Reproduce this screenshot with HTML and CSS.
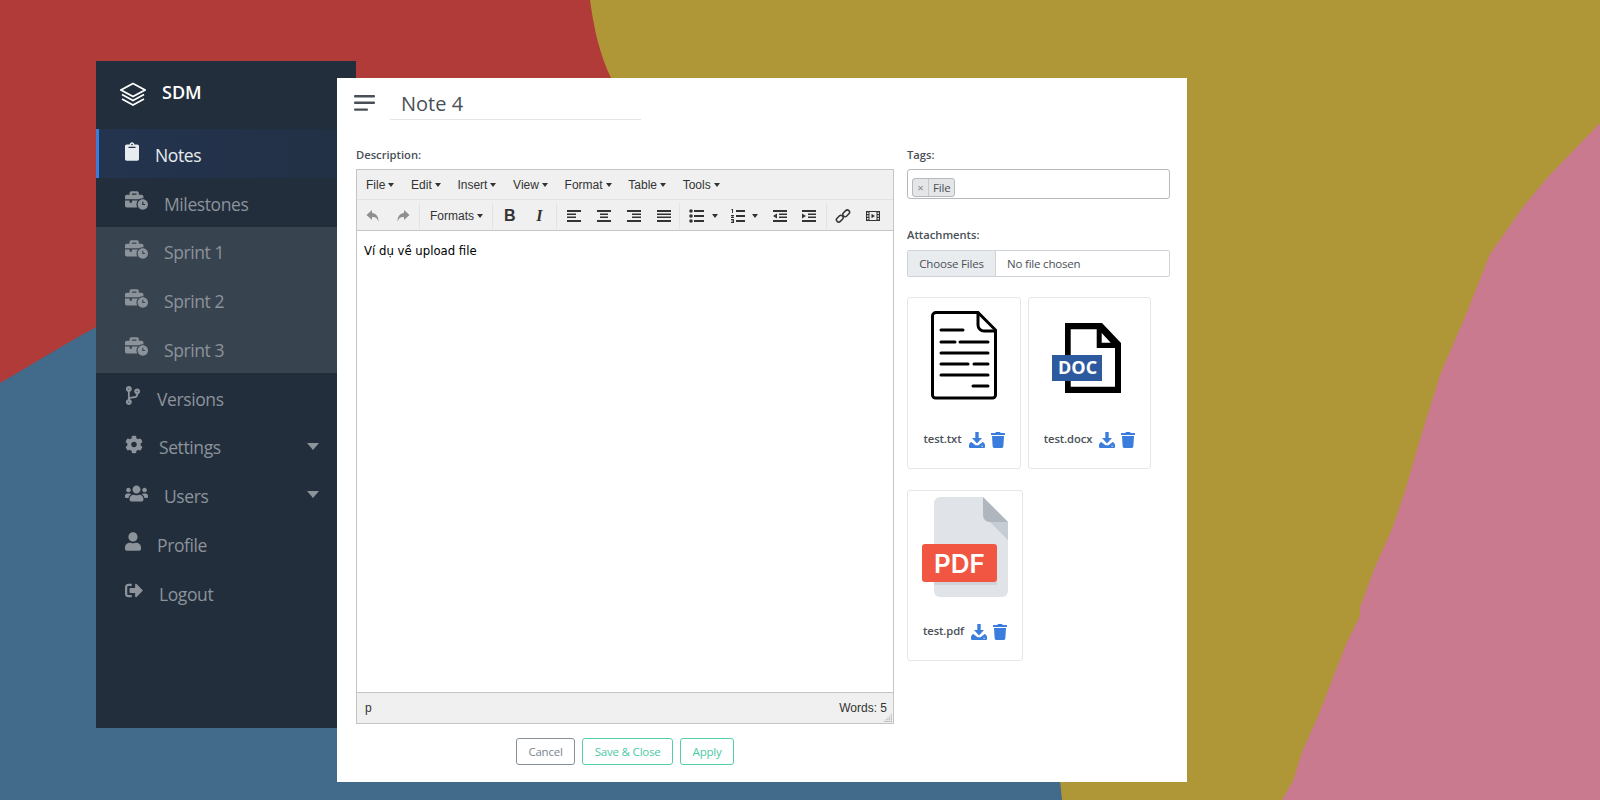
FILE: index.html
```html
<!DOCTYPE html>
<html lang="vi">
<head>
<meta charset="utf-8">
<title>SDM - Note 4</title>
<link rel="stylesheet" href="styles.css">
</head>
<body>
<svg class="wallpaper" viewBox="0 0 1600 800" preserveAspectRatio="none" aria-hidden="true">
  <rect width="1600" height="800" fill="#b13b39"/>
  <path fill="#426a8a" d="M0 383 C40 360 70 340 110 320 L700 300 L1062 780 L1062 800 L0 800 Z"/>
  <path fill="#af9737" d="M590 0 C594 30 600 55 611 78 L800 420 L1060 780 L1062 800 L1290 800 L1600 800 L1600 0 Z"/>
  <path fill="#ca7a8e" d="M1600 123 L1547 178 L1523 207 L1490 254 L1467 312 L1440 375 L1422 433 L1405 491 L1392 529 L1375 567 L1360 607 L1360 616 L1347 642 L1318 716 L1302 752 L1293 781 L1282 800 L1600 800 Z"/>
</svg>

<svg class="defs" aria-hidden="true">
  <defs>
    <symbol id="i-time" viewBox="0 0 640 512"><path d="M496 224c-79.59 0-144 64.41-144 144s64.41 144 144 144 144-64.41 144-144-64.41-144-144-144zm64 150.29c0 5.34-4.37 9.71-9.71 9.71h-60.57c-5.34 0-9.71-4.37-9.71-9.71v-76.57c0-5.34 4.37-9.71 9.71-9.71h12.57c5.34 0 9.71 4.37 9.71 9.71V352h38.29c5.34 0 9.71 4.37 9.71 9.71v12.58zM496 192c5.4 0 10.72.33 16 .81V144c0-25.6-22.4-48-48-48h-80V48c0-25.6-22.4-48-48-48H176c-25.6 0-48 22.4-48 48v48H48c-25.6 0-48 22.4-48 48v80h395.12c28.6-20.09 63.35-32 100.88-32zM320 96H192V64h128v32zM0 256v144c0 25.6 22.4 48 48 48h291.43C327.1 423.96 320 396.82 320 368c0-42.79 15.5-81.5 41-112H192v48c0 8.84-7.16 16-16 16h-32c-8.84 0-16-7.16-16-16v-48z"/></symbol>
    <symbol id="i-dl" viewBox="0 0 16 16"><path d="M6.300 0h3.400v6H13L8 11.500 3 6h3.300Z"/><path fill-rule="evenodd" d="M0 13.500c0-1.800 1-3 2.300-3.500L6.500 13.300h3L13.700 10c1.300.5 2.300 1.700 2.300 3.500V15a1 1 0 0 1-1 1H1a1 1 0 0 1-1-1ZM12.500 13.700v1h1.200v-1Z"/></symbol>
    <symbol id="i-trash" viewBox="0 0 448 512"><path d="M432 32H312l-9.4-18.7A24 24 0 0 0 281.1 0H166.8a23.72 23.72 0 0 0-21.4 13.3L136 32H16A16 16 0 0 0 0 48v32a16 16 0 0 0 16 16h416a16 16 0 0 0 16-16V48a16 16 0 0 0-16-16zM53.2 467a48 48 0 0 0 47.9 45h245.8a48 48 0 0 0 47.9-45L416 128H32z"/></symbol>
  </defs>
</svg>

<aside class="sidebar">
  <div class="brand">
    <svg class="brand-icon" viewBox="0 0 26 24" fill="none" stroke="#fff" stroke-width="1.700" stroke-linejoin="miter"><path d="M13 1.500 25 8 13 14.500 1 8Z"/><path d="M2 12.500 13 18.500 24 12.500"/><path d="M2 17 13 23 24 17"/></svg>
    <span>SDM</span>
  </div>
  <nav class="menu">
    <a class="item active"><svg class="ic w14" viewBox="0 0 384 512"><path d="M384 112v352c0 26.51-21.49 48-48 48H48c-26.51 0-48-21.49-48-48V112c0-26.51 21.49-48 48-48h80c0-35.29 28.71-64 64-64s64 28.71 64 64h80c26.51 0 48 21.49 48 48zM192 40c-13.255 0-24 10.745-24 24s10.745 24 24 24 24-10.745 24-24-10.745-24-24-24m96 114v-20a6 6 0 0 0-6-6H102a6 6 0 0 0-6 6v20a6 6 0 0 0 6 6h180a6 6 0 0 0 6-6z"/></svg><span>Notes</span></a>
    <a class="item"><svg class="ic w23"><use href="#i-time"/></svg><span>Milestones</span></a>
    <div class="submenu">
      <a class="item"><svg class="ic w23"><use href="#i-time"/></svg><span>Sprint 1</span></a>
      <a class="item"><svg class="ic w23"><use href="#i-time"/></svg><span>Sprint 2</span></a>
      <a class="item"><svg class="ic w23"><use href="#i-time"/></svg><span>Sprint 3</span></a>
    </div>
    <a class="item"><svg class="ic w16" viewBox="0 0 384 512"><path d="M384 144c0-44.2-35.8-80-80-80s-80 35.8-80 80c0 36.4 24.3 67.1 57.5 76.8-.6 16.1-4.2 28.5-11 36.9-15.4 19.2-49.3 22.4-85.2 25.7-28.2 2.6-57.4 5.4-81.3 16.9v-144c32.5-10.2 56-40.5 56-76.3 0-44.2-35.8-80-80-80S0 35.8 0 80c0 35.8 23.5 66.1 56 76.3v199.3C23.5 365.9 0 396.2 0 432c0 44.2 35.8 80 80 80s80-35.8 80-80c0-34-21.2-63.1-51.2-74.6 3.1-5.2 7.8-9.8 14.9-13.4 16.2-8.2 40.4-10.4 66.1-12.8 42.2-3.9 90-8.4 118.2-43.4 14-17.4 21.1-39.8 21.6-67.9 31.6-10.8 54.4-40.7 54.4-75.9zM80 64c8.8 0 16 7.2 16 16s-7.2 16-16 16-16-7.2-16-16 7.2-16 16-16zm0 384c-8.8 0-16-7.2-16-16s7.2-16 16-16 16 7.2 16 16-7.2 16-16 16zm224-320c8.8 0 16 7.2 16 16s-7.2 16-16 16-16-7.2-16-16 7.2-16 16-16z"/></svg><span>Versions</span></a>
    <a class="item caret"><svg class="ic w18" viewBox="0 0 512 512"><path d="M487.4 315.7l-42.6-24.6c4.3-23.2 4.3-47 0-70.2l42.6-24.6c4.9-2.8 7.1-8.6 5.5-14-11.1-35.6-30-67.8-54.7-94.6-3.8-4.1-10-5.1-14.8-2.3L380.8 110c-17.9-15.4-38.5-27.3-60.8-35.1V25.8c0-5.6-3.9-10.5-9.4-11.7-36.7-8.2-74.3-7.8-109.2 0-5.5 1.2-9.4 6.1-9.4 11.7V75c-22.2 7.9-42.8 19.8-60.8 35.1L88.7 85.5c-4.9-2.8-11-1.9-14.8 2.3-24.7 26.7-43.6 58.9-54.7 94.6-1.7 5.4.6 11.2 5.5 14L67.3 221c-4.3 23.2-4.3 47 0 70.2l-42.6 24.6c-4.9 2.8-7.1 8.6-5.5 14 11.1 35.6 30 67.8 54.7 94.6 3.8 4.1 10 5.1 14.8 2.3l42.6-24.6c17.9 15.4 38.5 27.3 60.8 35.1v49.2c0 5.6 3.9 10.5 9.4 11.7 36.7 8.2 74.3 7.8 109.2 0 5.5-1.2 9.4-6.1 9.4-11.7v-49.2c22.2-7.9 42.8-19.8 60.8-35.1l42.6 24.6c4.9 2.8 11 1.9 14.8-2.3 24.7-26.7 43.6-58.9 54.7-94.6 1.5-5.5-.7-11.3-5.6-14.1zM256 336c-44.1 0-80-35.9-80-80s35.9-80 80-80 80 35.9 80 80-35.9 80-80 80z"/></svg><span>Settings</span></a>
    <a class="item caret"><svg class="ic w23" viewBox="0 0 640 512"><path d="M96 224c35.3 0 64-28.7 64-64s-28.7-64-64-64-64 28.7-64 64 28.7 64 64 64zm448 0c35.3 0 64-28.7 64-64s-28.7-64-64-64-64 28.7-64 64 28.7 64 64 64zm32 32h-64c-17.6 0-33.5 7.1-45.1 18.6 40.3 22.1 68.9 62 75.1 109.4h66c17.7 0 32-14.3 32-32v-32c0-35.3-28.7-64-64-64zm-256 0c61.9 0 112-50.1 112-112S381.9 32 320 32 208 82.1 208 144s50.1 112 112 112zm76.8 32h-8.3c-20.8 10-43.9 16-68.5 16s-47.6-6-68.5-16h-8.3C179.6 288 128 339.6 128 403.2V432c0 26.5 21.5 48 48 48h288c26.5 0 48-21.5 48-48v-28.8c0-63.6-51.6-115.2-115.2-115.2zm-223.7-13.4C161.5 263.1 145.6 256 128 256H64c-35.3 0-64 28.7-64 64v32c0 17.7 14.3 32 32 32h65.9c6.3-47.4 34.9-87.3 75.2-109.4z"/></svg><span>Users</span></a>
    <a class="item"><svg class="ic w16" viewBox="0 0 448 512"><path d="M224 256c70.7 0 128-57.3 128-128S294.7 0 224 0 96 57.3 96 128s57.3 128 128 128zm89.6 32h-16.7c-22.2 10.2-46.9 16-72.9 16s-50.6-5.8-72.9-16h-16.7C60.2 288 0 348.2 0 422.4V464c0 26.5 21.5 48 48 48h352c26.5 0 48-21.5 48-48v-41.6c0-74.2-60.2-134.4-134.4-134.4z"/></svg><span>Profile</span></a>
    <a class="item"><svg class="ic w18" viewBox="0 0 512 512"><path d="M497 273L329 441c-15 15-41 4.5-41-17v-96H152c-13.3 0-24-10.7-24-24v-96c0-13.3 10.7-24 24-24h136V88c0-21.4 25.9-32 41-17l168 168c9.3 9.4 9.3 24.6 0 34zM192 436v-40c0-6.6-5.4-12-12-12H96c-17.7 0-32-14.3-32-32V160c0-17.7 14.3-32 32-32h84c6.6 0 12-5.4 12-12V76c0-6.6-5.4-12-12-12H96c-53 0-96 43-96 96v192c0 53 43 96 96 96h84c6.6 0 12-5.4 12-12z"/></svg><span>Logout</span></a>
  </nav>
</aside>

<main class="modal">
  <header class="modal-head">
    <svg class="burger" viewBox="0 0 21 16"><rect y="0" width="21" height="2.400" rx="1"/><rect y="6.600" width="21" height="2.400" rx="1"/><rect y="13.400" width="14" height="2.400" rx="1"/></svg>
    <div class="title">Note 4</div>
  </header>
  <div class="modal-body">
    <section class="left">
      <label class="lbl">Description:</label>
      <div class="editor">
        <div class="menubar">
          <span class="m">File</span><span class="m">Edit</span><span class="m">Insert</span><span class="m">View</span><span class="m">Format</span><span class="m">Table</span><span class="m">Tools</span>
        </div>
        <div class="toolbar">
          <div class="tgroup g-hist">
            <svg class="t dim" viewBox="0 0 16 16"><path d="M7 2 1.500 7 7 12V9c3-.3 5 .6 6.500 4.500C13.700 8.500 11 5.300 7 5Z"/></svg>
            <svg class="t dim" viewBox="0 0 16 16"><path d="M9 2l5.500 5L9 12V9C6 8.700 4 9.600 2.500 13.500 2.300 8.500 5 5.300 9 5Z"/></svg>
          </div>
          <div class="tgroup g-fmt"><span class="formats">Formats</span></div>
          <div class="tgroup g-style">
            <span class="t-b">B</span><span class="t-i">I</span>
          </div>
          <div class="tgroup g-align">
            <svg class="t" viewBox="0 0 16 16"><path d="M1 2h14v2H1zM1 5.500h9v1.500H1zM1 8.500h9v1.500H1zM1 12h14v2H1z"/></svg>
            <svg class="t" viewBox="0 0 16 16"><path d="M1 2h14v2H1zM4 5.500h8v1.500H4zM4 8.500h8v1.500H4zM1 12h14v2H1z"/></svg>
            <svg class="t" viewBox="0 0 16 16"><path d="M1 2h14v2H1zM6 5.500h9v1.500H6zM6 8.500h9v1.500H6zM1 12h14v2H1z"/></svg>
            <svg class="t" viewBox="0 0 16 16"><path d="M1 2h14v2H1zM1 5.500h14v1.500H1zM1 8.500h14v1.500H1zM1 12h14v2H1z"/></svg>
          </div>
          <div class="tgroup g-list">
            <span class="split s1"><svg class="t" viewBox="0 0 16 16"><path d="M5 2h10v2H5zM5 7h10v2H5zM5 12h10v2H5z"/><circle cx="2" cy="3" r="1.800"/><circle cx="2" cy="8" r="1.800"/><circle cx="2" cy="13" r="1.800"/></svg><i class="tri"></i></span>
            <span class="split s2"><svg class="t" viewBox="0 0 16 16"><path d="M6 2h9v2H6zM6 7h9v2H6zM6 12h9v2H6zM1.500 1h1.500v4H2V2H1.500zM1 7h3v1L2.500 9H4v1H1V9l2-1H1zM1 11h3v4H1v-1h2v-.5H1.500v-1H3V12H1z"/></svg><i class="tri"></i></span>
            <svg class="t" viewBox="0 0 16 16"><path d="M1 2h14v2H1zM7 5.500h8v1.500H7zM7 8.500h8v1.500H7zM1 12h14v2H1zM5 5.500v5L1 8z"/></svg>
            <svg class="t" viewBox="0 0 16 16"><path d="M1 2h14v2H1zM7 5.500h8v1.500H7zM7 8.500h8v1.500H7zM1 12h14v2H1zM1 5.500v5L5 8z"/></svg>
          </div>
          <div class="tgroup last">
            <svg class="t t-line" viewBox="0 0 16 16"><rect x="1" y="8.500" width="7.500" height="4.500" rx="2.200" transform="rotate(-45 4.700 10.700)"/><rect x="7.500" y="3" width="7.500" height="4.500" rx="2.200" transform="rotate(-45 11.300 5.300)"/></svg>
            <svg class="t" viewBox="0 0 16 16"><path fill-rule="evenodd" d="M1 3h14v10H1ZM4.500 4V12h7V4ZM2 4.500v1.500h1.500V4.500ZM2 7.200v1.500h1.500V7.200ZM2 10v1.500h1.500V10ZM12.500 4.500v1.500H14V4.500ZM12.500 7.200v1.500H14V7.200ZM12.500 10v1.500H14V10Z"/><path d="M6.500 5.800v4.400L10 8Z"/></svg>
          </div>
        </div>
        <div class="content">Ví dụ về upload file</div>
        <div class="statusbar">
          <span class="path">p</span>
          <span class="words">Words: 5</span>
          <svg class="grip" viewBox="0 0 10 10"><path d="M9 1h1v1H9zM7 3h1v1H7zM9 3h1v1H9zM5 5h1v1H5zM7 5h1v1H7zM9 5h1v1H9zM3 7h1v1H3zM5 7h1v1H5zM7 7h1v1H7zM9 7h1v1H9zM1 9h1v1H1zM3 9h1v1H3zM5 9h1v1H5zM7 9h1v1H7zM9 9h1v1H9z"/></svg>
        </div>
      </div>
      <div class="actions">
        <button class="btn grey">Cancel</button>
        <button class="btn green">Save &amp; Close</button>
        <button class="btn green">Apply</button>
      </div>
    </section>
    <section class="right">
      <label class="lbl">Tags:</label>
      <div class="tags"><span class="tag"><b>×</b><em>File</em></span></div>
      <label class="lbl attach">Attachments:</label>
      <div class="file"><span class="file-btn">Choose Files</span><span class="file-txt">No file chosen</span></div>
      <div class="cards">
        <article class="card c1">
          <svg class="thumb" width="66" height="89" viewBox="0 0 66 89" fill="none" stroke="#000" stroke-width="3"><path d="M5 1.500H47L64.500 19V84a3 3 0 0 1-3 3H4.500a3 3 0 0 1-3-3V5a3.500 3.500 0 0 1 3.500-3.500Z"/><path d="M47 2V14a6 6 0 0 0 6 6H64"/><path d="M10 19H32M10 31H24M29 31H57M10 42H57M10 53H37M43 53H57M10 64H57M42 75H57" stroke-linecap="round"/></svg>
          <div class="foot"><span>test.txt</span><svg class="act"><use href="#i-dl"/></svg><svg class="act tr"><use href="#i-trash"/></svg></div>
        </article>
        <article class="card c2">
          <svg class="thumb t-doc" width="70" height="72" viewBox="0 0 70 72"><path fill-rule="evenodd" d="M13 0H50L69 20V70H13ZM18.700 6.300V63.700H63V25H44.700V6.300ZM49.700 10V19.700H58.700Z"/><rect x="0" y="32" width="50" height="26" fill="#2d5a9e"/><text x="6" y="51" class="doc">DOC</text></svg>
          <div class="foot"><span>test.docx</span><svg class="act"><use href="#i-dl"/></svg><svg class="act tr"><use href="#i-trash"/></svg></div>
        </article>
        <article class="card c3">
          <svg class="thumb" width="86" height="100" viewBox="0 0 86 100"><path fill="#e0e3e7" d="M18 0H61L86 25V94a6 6 0 0 1-6 6H18a6 6 0 0 1-6-6V6a6 6 0 0 1 6-6Z"/><path fill="#c5ccd3" d="M61 18 86 43V25H68a7 7 0 0 1-7-7Z"/><path fill="#afb6bd" d="M61 0V18a7 7 0 0 0 7 7H86Z"/><path fill="#cfd4da" d="M12 84H75V88H12Z"/><rect x="0" y="47" width="75" height="38" rx="3" fill="#f15642"/><text x="12" y="75.500" class="pdf">PDF</text></svg>
          <div class="foot"><span>test.pdf</span><svg class="act"><use href="#i-dl"/></svg><svg class="act tr"><use href="#i-trash"/></svg></div>
        </article>
      </div>
    </section>
  </div>
</main>
</body>
</html>
```

FILE: styles.css
```css
* { box-sizing: border-box; }
html, body { margin: 0; height: 100%; overflow: hidden; }
body { font-family: "Open Sans", "Noto Sans", sans-serif; color: #495057; background: #b13b39; }
.wallpaper { position: absolute; inset: 0; width: 1600px; height: 800px; }
.defs { position: absolute; width: 0; height: 0; }

.sidebar { position: absolute; left: 96px; top: 61px; width: 260px; height: 667px; background: #222e3c; }
.brand { height: 68px; display: flex; align-items: center; padding: 0 0 4px 24px; gap: 16px; color: #fff; font-weight: 600; font-size: 18px; }
.brand span { margin-top: -3px; }
.brand-icon { width: 26px; height: 24px; margin-top: 2px; }
.item { height: 48.750px; display: flex; align-items: center; gap: 16px; padding: 3px 0 0 29px; font-size: 17.500px; color: #8c939b; position: relative; }
.item .ic { fill: #8c939b; height: 19px; margin-top: -6px; flex: none; }
.item span { letter-spacing: -.4px; }
.w14 { width: 14px; }
.w16 { width: 16px; }
.w18 { width: 18px; }
.w23 { width: 23px; }
.item.active { background: linear-gradient(90deg, #24344f, #223044); border-left: 3px solid #3b7ddd; padding-left: 26px; color: #e9ecef; }
.item.active .ic { fill: #e9ecef; }
.submenu { background: #384350; }
.caret::after { content: ""; position: absolute; right: 37px; top: 21px; border-left: 6.500px solid transparent; border-right: 6.500px solid transparent; border-top: 7px solid #8c939b; }

.modal { position: absolute; left: 337px; top: 78px; width: 850px; height: 704px; background: #fff; }
.modal-head { display: flex; align-items: center; height: 42px; padding: 0 0 0 17px; }
.burger { width: 21px; height: 16px; fill: #495057; margin-top: 8px; }
.title { margin-left: 15px; width: 251px; height: 42px; padding: 13px 0 0 11px; font-size: 20px; line-height: 26px; color: #495057; border-bottom: 1px solid #e3e5e7; }
.modal-body { display: flex; padding: 26px 0 0 19px; gap: 13px; }
.left { width: 538px; }
.right { width: 263px; }
.lbl { display: block; font-size: 11.200px; font-weight: 600; line-height: 18px; height: 23px; color: #495057; }
.editor { height: 555px; border: 1px solid #c5c5c5; display: flex; flex-direction: column; font-family: "Liberation Sans", Arial, sans-serif; color: #333; background: #fff; margin-top: -.5px; }
.menubar { height: 30px; background: #f0f0f0; border-bottom: 1px solid #e2e2e2; display: flex; align-items: center; padding: 2px 0 0 9px; gap: 16.700px; font-size: 12px; }
.m::after, .formats::after { content: ""; display: inline-block; margin-left: 3px; vertical-align: 2px; border-left: 3.500px solid transparent; border-right: 3.500px solid transparent; border-top: 4px solid #333; }
.toolbar { height: 31px; background: #f0f0f0; border-bottom: 1px solid #c5c5c5; display: flex; align-items: center; padding: 2px 0 0 8px; font-size: 12px; }
.tgroup { display: flex; align-items: center; gap: 14px; height: 26px; border-right: 1px solid #e2e2e2; padding: 0 9px; flex: none; }
.g-hist { width: 55px; padding: 0; }
.g-fmt { width: 73px; padding-left: 10px; }
.g-style { width: 64px; }
.g-align { width: 123px; padding-left: 9px; }
.g-list { width: 147px; padding-left: 9px; gap: 13px; }
.tgroup.last { border-right: 0; padding-left: 8px; }
.t { width: 16px; height: 16px; fill: #333; flex: none; }
.t.dim { fill: #8f8f8f; }
.t-line { fill: none !important; stroke: #333; stroke-width: 1.500; }
.t-b { font: 700 16px "Liberation Sans", sans-serif; color: #333; width: 16px; text-align: center; }
.t-i { font: italic 700 16px "Liberation Serif", serif; color: #333; width: 16px; text-align: center; }
.split { display: flex; align-items: center; gap: 7px; }
.s1 { margin-right: -1px; }
.s2 { gap: 6px; margin-right: 1px; }
.tri { display: block; border-left: 3.500px solid transparent; border-right: 3.500px solid transparent; border-top: 4px solid #333; }
.content { flex: 1; padding: 12px 7px; font: 11.700px/16px "DejaVu Sans", Verdana, sans-serif; color: #000; }
.statusbar { height: 31px; background: #f0f0f0; border-top: 1px solid #c5c5c5; display: flex; align-items: center; justify-content: space-between; padding: 0 6px 0 8px; font-size: 12px; position: relative; }
.grip { position: absolute; right: 1px; bottom: 1px; width: 9px; height: 9px; fill: #999; }
.actions { display: flex; justify-content: center; gap: 7px; margin-top: 14px; }
.btn { height: 27px; font: 11.500px "Open Sans", sans-serif; letter-spacing: -.2px; padding: 0 11.500px; background: #fff; border-radius: 3px; border: 1px solid; }
.grey { color: #7c858d; border-color: #868e96; }
.green { color: #4bc9a3; border-color: #55cfaa; }

.tags { height: 30px; border: 1px solid #b5b9bd; border-radius: 3px; padding: 5px 4px; margin-top: -.5px; }
.tag { display: inline-flex; height: 19px; border: 1px solid #b5b9bd; border-radius: 3px; background: #e4e6e8; font-size: 11.500px; line-height: 17px; overflow: hidden; }
.tag b { width: 16px; text-align: center; font-weight: 400; color: #888; border-right: 1px solid #c5c9cd; }
.tag em { font-style: normal; padding: 0 4px; color: #495057; letter-spacing: -.2px; }
.attach { margin-top: 27px; height: 25px; }
.file { display: flex; height: 27px; border: 1px solid #ced4da; border-radius: 2px; font-size: 11.500px; align-items: stretch; margin-top: -.5px; }
.file-btn { width: 88px; background: #e9ecef; border-right: 1px solid #ced4da; display: flex; align-items: center; justify-content: center; letter-spacing: -.2px; }
.file-txt { display: flex; align-items: center; padding-left: 11px; letter-spacing: -.2px; }
.cards { display: flex; flex-wrap: wrap; gap: 21px 7px; margin-top: 20px; }
.card { height: 172px; border: 1px solid #e4e6e9; border-radius: 3px; display: flex; flex-direction: column; align-items: center; padding-top: 13px; position: relative; }
.c1 { width: 114px; }
.c2 { width: 123px; }
.c3 { width: 116px; height: 171px; padding-top: 6px; }
.t-doc { margin: 12px 5px 0 0; }
.thumb { flex: none; }
.foot { position: absolute; left: 0; right: 0; top: 131px; display: flex; justify-content: center; align-items: center; gap: 7px; font-size: 11.200px; font-weight: 600; color: #495057; letter-spacing: -.1px; }
.c3 .foot { top: 130px; }
.act { width: 16px; height: 16px; fill: #3b7ddd; flex: none; margin-top: 3px; }
.act.tr { width: 14px; margin-left: -1px; }
.doc { font: 700 18px "Open Sans", sans-serif; fill: #fff; }
.pdf { font: 600 26px "Inter", sans-serif; fill: #fff; }
```
